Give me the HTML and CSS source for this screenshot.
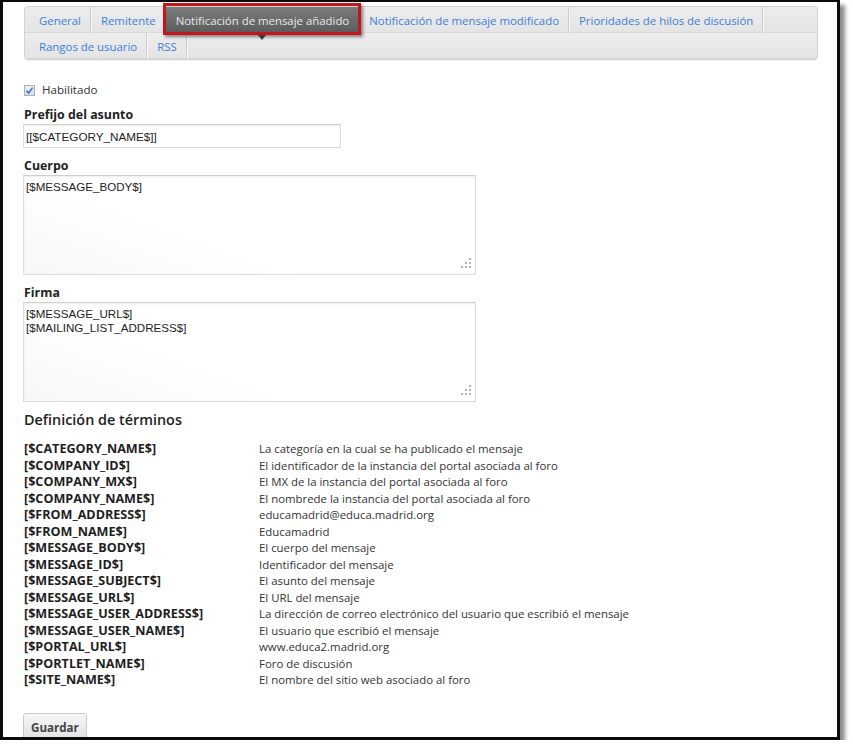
FILE: index.html
```html
<!DOCTYPE html>
<html lang="es">
<head>
<meta charset="utf-8">
<title>Notificación de mensaje añadido</title>
<link rel="stylesheet" href="styles.css">
</head>
<body>
<div class="frame">
  <nav class="tabs">
    <a class="tab">General</a>
    <a class="tab">Remitente</a>
    <span class="tab active">Notificación de mensaje añadido</span>
    <a class="tab">Notificación de mensaje modificado</a>
    <a class="tab">Prioridades de hilos de discusión</a>
    <a class="tab">Rangos de usuario</a>
    <a class="tab">RSS</a>
  </nav>

  <form class="form">
    <label class="check">
      <span class="box"><svg width="9" height="9" viewBox="0 0 9 9"><path d="M1.5 4.8 L3.6 7 L7.6 1.6" fill="none" stroke="#3a6fc8" stroke-width="1.5"/></svg></span>
      Habilitado
    </label>

    <div class="lbl">Prefijo del asunto</div>
    <input class="input" type="text" value="[[$CATEGORY_NAME$]]">

    <div class="lbl lbl-gap">Cuerpo</div>
    <div class="area-wrap">
      <textarea class="area">[$MESSAGE_BODY$]</textarea>
      <svg class="grip" width="11" height="10" viewBox="0 0 11 10"><g fill="#b4b4b4"><rect x="8" y="0" width="2" height="2"/><rect x="4" y="4" width="2" height="2"/><rect x="8" y="4" width="2" height="2"/><rect x="0" y="8" width="2" height="2"/><rect x="4" y="8" width="2" height="2"/><rect x="8" y="8" width="2" height="2"/></g></svg>
    </div>

    <div class="lbl lbl-gap">Firma</div>
    <div class="area-wrap">
      <textarea class="area">[$MESSAGE_URL$]
[$MAILING_LIST_ADDRESS$]</textarea>
      <svg class="grip" width="11" height="10" viewBox="0 0 11 10"><g fill="#b4b4b4"><rect x="8" y="0" width="2" height="2"/><rect x="4" y="4" width="2" height="2"/><rect x="8" y="4" width="2" height="2"/><rect x="0" y="8" width="2" height="2"/><rect x="4" y="8" width="2" height="2"/><rect x="8" y="8" width="2" height="2"/></g></svg>
    </div>

    <h3 class="heading">Definición de términos</h3>
    <dl class="terms">
      <dt>[$CATEGORY_NAME$]</dt><dd>La categoría en la cual se ha publicado el mensaje</dd>
      <dt>[$COMPANY_ID$]</dt><dd>El identificador de la instancia del portal asociada al foro</dd>
      <dt>[$COMPANY_MX$]</dt><dd>El MX de la instancia del portal asociada al foro</dd>
      <dt>[$COMPANY_NAME$]</dt><dd>El nombrede la instancia del portal asociada al foro</dd>
      <dt>[$FROM_ADDRESS$]</dt><dd>educamadrid@educa.madrid.org</dd>
      <dt>[$FROM_NAME$]</dt><dd>Educamadrid</dd>
      <dt>[$MESSAGE_BODY$]</dt><dd>El cuerpo del mensaje</dd>
      <dt>[$MESSAGE_ID$]</dt><dd>Identificador del mensaje</dd>
      <dt>[$MESSAGE_SUBJECT$]</dt><dd>El asunto del mensaje</dd>
      <dt>[$MESSAGE_URL$]</dt><dd>El URL del mensaje</dd>
      <dt>[$MESSAGE_USER_ADDRESS$]</dt><dd>La dirección de correo electrónico del usuario que escribió el mensaje</dd>
      <dt>[$MESSAGE_USER_NAME$]</dt><dd>El usuario que escribió el mensaje</dd>
      <dt>[$PORTAL_URL$]</dt><dd>www.educa2.madrid.org</dd>
      <dt>[$PORTLET_NAME$]</dt><dd>Foro de discusión</dd>
      <dt>[$SITE_NAME$]</dt><dd>El nombre del sitio web asociado al foro</dd>
    </dl>

    <button class="btn" type="button">Guardar</button>
  </form>
</div>
</body>
</html>
```

FILE: styles.css
```css
* { box-sizing: border-box; }

body {
  margin: 0;
  background: #fff;
  font-family: "Open Sans", "DejaVu Sans", sans-serif;
  font-size: 11.4px;
  color: #333;
}

.frame {
  width: 840px;
  height: 740px;
  border: 3px solid #0a0a0a;
  border-top-width: 2px;
  box-shadow: 5px 5px 4px rgba(0, 0, 0, 0.45);
  padding: 4px 19px 0 21px;
  overflow: hidden;
  background: #fff;
}

/* tabs */
.tabs {
  display: flex;
  flex-wrap: wrap;
  border: 1px solid #d3d3d3;
  border-radius: 4px;
  padding-left: 4px;
  background: repeating-linear-gradient(to bottom, #ededed 0px, #e4e4e4 25px, #d9d9d9 25px, #d9d9d9 26px);
  box-shadow: 0 1px 1px rgba(0, 0, 0, 0.06);
}

.tab {
  position: relative;
  height: 26px;
  line-height: 28px;
  padding: 0 9px 0 10px;
  border-right: 1px solid #cdcdcd;
  box-shadow: 1px 0 0 #f6f6f6;
  color: #3a80d6;
  white-space: nowrap;
  text-decoration: none;
}

.tab.active {
  background: linear-gradient(to bottom, #7c7c7c, #5b5b5b);
  color: #e8e8e8;
  border-right-color: transparent;
  box-shadow: none;
  z-index: 1;
}

.tab.active::before {
  content: "";
  position: absolute;
  left: -3px;
  right: -3px;
  top: -4px;
  bottom: -2px;
  border: 3px solid #c3161c;
  box-shadow: 2px 2px 3px rgba(0, 0, 0, 0.45);
}

.tab.active::after {
  content: "";
  position: absolute;
  left: 50%;
  bottom: -7px;
  margin-left: -4px;
  border-left: 4px solid transparent;
  border-right: 4px solid transparent;
  border-top: 5px solid #3a3a3a;
}

/* form */
.form {
  padding-top: 22px;
}

.check {
  display: flex;
  align-items: center;
  height: 16px;
  line-height: 16px;
  gap: 7px;
  color: #333;
  font-size: 11.6px;
}

.box {
  width: 11px;
  height: 11px;
  border: 1px solid #a9b0bb;
  background: linear-gradient(to bottom, #eef0f4, #d8dce4);
  display: flex;
  align-items: center;
  justify-content: center;
}

.lbl {
  font-size: 12.4px;
  font-weight: 700;
  line-height: 16px;
  margin: 9px 0 1px;
  color: #222;
}

.lbl-gap {
  margin-top: 10px;
}

.input {
  display: block;
  width: 318px;
  height: 24px;
  margin: 0 0 0 -1px;
  padding: 0 2px;
  border: 1px solid #dcdcdc;
  border-top-color: #cfcfcf;
  box-shadow: inset 0 1px 2px rgba(0, 0, 0, 0.08);
  font-family: "Liberation Sans", Arial, sans-serif;
  font-size: 11.7px;
  color: #222;
  background: #fff;
}

.area-wrap {
  position: relative;
  width: 453px;
  height: 100px;
  margin-left: -1px;
}

.area {
  display: block;
  width: 100%;
  height: 100%;
  resize: none;
  margin: 0;
  padding: 4px 2px;
  border: 1px solid #dcdcdc;
  border-top-color: #cfcfcf;
  box-shadow: inset 0 1px 2px rgba(0, 0, 0, 0.08);
  font-family: "Liberation Sans", Arial, sans-serif;
  font-size: 11.6px;
  line-height: 14px;
  color: #222;
  background: linear-gradient(200deg, #ffffff 60%, #f5f7f9 100%);
}

.grip {
  position: absolute;
  right: 4px;
  bottom: 7px;
}

.heading {
  margin: 8px 0 0;
  font-size: 14.4px;
  font-weight: 600;
  line-height: 20px;
  color: #222;
}

.terms {
  display: grid;
  grid-template-columns: 235px auto;
  margin: 11px 0 0;
  line-height: 16.5px;
}

.terms dt {
  font-size: 12.6px;
  font-weight: 700;
  color: #1e1e1e;
}

.terms dd {
  margin: 0;
  color: #333;
}

.btn {
  display: block;
  margin: 24px 0 0 -1px;
  height: 29px;
  padding: 0 7px;
  border: 1px solid #cacaca;
  border-radius: 3px;
  background: linear-gradient(to bottom, #f7f7f7, #e0e0e0);
  font-family: "Open Sans", sans-serif;
  font-size: 11.6px;
  font-weight: 700;
  color: #444;
}
```
